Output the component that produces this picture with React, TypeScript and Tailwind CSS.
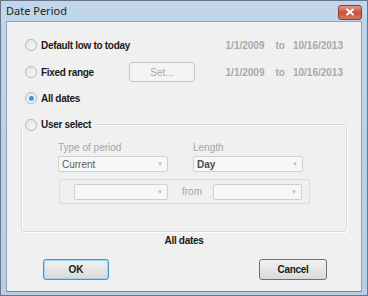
import React from "react";

const font = { fontFamily: '"Liberation Sans", Arial, sans-serif' };

function Radio({ checked }: { checked?: boolean }) {
  return (
    <span className="relative inline-flex h-[12px] w-[12px] shrink-0 items-center justify-center rounded-full border border-[#b8b8b8] bg-gradient-to-br from-[#e2e2e2] to-[#fbfbfb]">
      {checked && (
        <span className="h-[5px] w-[5px] rounded-full bg-gradient-to-br from-[#2a7ec2] to-[#5fb1e8]" />
      )}
    </span>
  );
}

function Combo({ value, w, bold }: { value?: string; w: string; bold?: boolean }) {
  return (
    <div className={`flex h-[16px] ${w} items-center justify-between rounded-[2px] border border-[#cfcfcf] bg-[#f7f7f7] pl-[3px] pr-[4px]`}>
      <span className={`text-[10px] ${bold ? "font-bold text-[#4a4a4a]" : "text-[#5a5a5a]"}`}>{value ?? ""}</span>
      <span className="text-[6px] leading-none text-[#bdbdbd]">▼</span>
    </div>
  );
}

function Dates() {
  return (
    <span className="ml-auto flex font-bold text-[#a9a9a9]">
      <span>1/1/2009</span>
      <span className="ml-[11px]">to</span>
      <span className="ml-[8px]">10/16/2013</span>
    </span>
  );
}

export default function App() {
  return (
    <div className="h-[296px] w-[368px] overflow-hidden bg-[#9fb3c9]" style={font}>
      <div className="flex h-full w-full flex-col border border-[#6a7683] bg-gradient-to-b from-[#c1d5ec] to-[#b8cde6]">
        {/* title bar */}
        <div className="flex h-[20px] shrink-0 items-center justify-between pl-[5px] pr-[5px]">
          <span className="text-[11px] text-[#1e1e1e]" style={{ fontFamily: '"Noto Sans", "Liberation Sans", sans-serif' }}>Date Period</span>
          <div className="mt-[2px] flex h-[15px] w-[24px] items-center justify-center rounded-[3px] border border-[#8c3a2c] bg-gradient-to-b from-[#e69a88] via-[#c9523c] to-[#d47560]">
            <svg width="10" height="8" viewBox="0 0 10 8">
              <path d="M1.5 1 L8.5 7 M8.5 1 L1.5 7" stroke="#ffffff" strokeWidth="2" />
            </svg>
          </div>
        </div>
        {/* content */}
        <div className="mx-[5px] mb-[3px] flex flex-1 flex-col border border-[#8ea3b9] border-b-[#2a9fd6] bg-[#f0f0f0] text-[10px]">
          <div className="flex flex-col pl-[18px] pr-[18px] pt-[16px]">
            <div className="flex h-[14px] items-center whitespace-nowrap">
              <Radio />
              <span className="ml-[4px] font-bold tracking-[-0.3px] text-[#1a1a1a]">Default low to today</span>
              <Dates />
            </div>
            <div className="mt-[13px] flex h-[14px] items-center whitespace-nowrap">
              <Radio />
              <span className="ml-[4px] w-[88px] font-bold tracking-[-0.3px] text-[#1a1a1a]">Fixed range</span>
              <div className="flex h-[20px] w-[66px] items-center justify-center rounded-[3px] border border-[#c6c6c6] bg-[#f4f4f4] text-[#a8a8a8]">Set...</div>
              <Dates />
            </div>
            <div className="mt-[12px] flex h-[14px] items-center whitespace-nowrap">
              <Radio checked />
              <span className="ml-[4px] font-bold tracking-[-0.3px] text-[#1a1a1a]">All dates</span>
            </div>
          </div>
          {/* group */}
          <div className="relative mx-[14px] mt-[19px] h-[108px] rounded-[3px] border border-[#dcdcdc] shadow-[inset_1px_1px_0_#ffffff,1px_1px_0_#ffffff]">
            <div className="absolute left-[3px] top-[-8px] flex items-center whitespace-nowrap bg-[#f0f0f0] pr-[3px]">
              <Radio />
              <span className="ml-[4px] font-bold tracking-[-0.3px] text-[#1a1a1a]">User select</span>
            </div>
            <div className="flex gap-[25px] pl-[36px] pt-[15px]">
              <div className="flex flex-col gap-[1px]">
                <span className="text-[#a5a5a5]">Type of period</span>
                <Combo value="Current" w="w-[110px]" />
              </div>
              <div className="flex flex-col gap-[1px]">
                <span className="text-[#a5a5a5]">Length</span>
                <Combo value="Day" bold w="w-[110px]" />
              </div>
            </div>
            <div className="ml-[37px] mt-[7px] flex h-[25px] w-[251px] items-center rounded-[2px] border border-[#dcdcdc] pl-[14px]">
              <Combo w="w-[94px]" />
              <span className="ml-[14px] text-[#a5a5a5]">from</span>
              <div className="ml-[11px]"><Combo w="w-[89px]" /></div>
            </div>
          </div>
          <div className="mt-[1px] text-center font-bold tracking-[-0.3px] text-[#1a1a1a]">All dates</div>
          <div className="mt-[11px] flex justify-between pl-[36px] pr-[34px]">
            <div className="flex h-[21px] w-[66px] items-center justify-center rounded-[3px] border border-[#3c9ad8] bg-gradient-to-b from-[#f2f2f2] to-[#d9d9d9] font-bold text-[#1a1a1a] shadow-[inset_0_0_0_1px_#9fd4f5]">OK</div>
            <div className="flex h-[21px] w-[68px] items-center justify-center rounded-[3px] border border-[#707070] bg-gradient-to-b from-[#f2f2f2] to-[#d9d9d9] font-bold tracking-[-0.3px] text-[#1a1a1a]">Cancel</div>
          </div>
        </div>
      </div>
    </div>
  );
}
